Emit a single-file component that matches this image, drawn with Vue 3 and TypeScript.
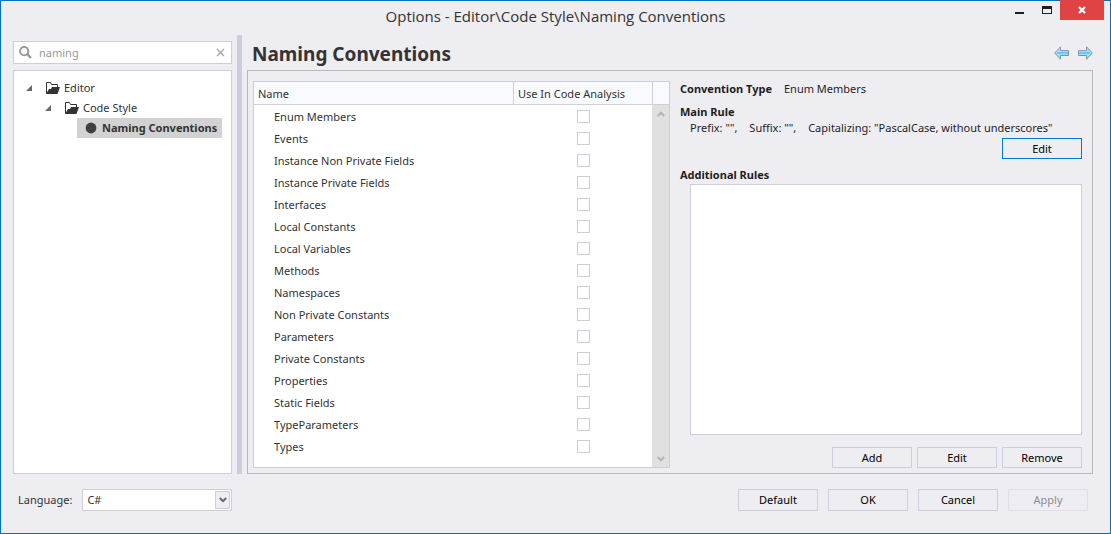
<script setup lang="ts">
import { reactive, ref } from 'vue'

interface Convention {
  name: string
  analysis: boolean
}

const names: string[] = [
  'Enum Members',
  'Events',
  'Instance Non Private Fields',
  'Instance Private Fields',
  'Interfaces',
  'Local Constants',
  'Local Variables',
  'Methods',
  'Namespaces',
  'Non Private Constants',
  'Parameters',
  'Private Constants',
  'Properties',
  'Static Fields',
  'TypeParameters',
  'Types',
]
const conventions = reactive<Convention[]>(names.map((name) => ({ name, analysis: false })))
const selected = ref<string>('Enum Members')
const search = ref<string>('naming')
const language = ref<string>('C#')
</script>

<template>
  <div class="window">
    <header class="titlebar">
      <div class="title">Options - Editor\Code Style\Naming Conventions</div>
      <div class="controls">
        <button type="button" class="ctl" aria-label="Minimize">
          <svg width="9" height="10" viewBox="0 0 9 10"><rect y="7" width="9" height="2" fill="#1e1e1e" /></svg>
        </button>
        <button type="button" class="ctl" aria-label="Maximize">
          <svg width="10" height="8" viewBox="0 0 10 8"><path d="M0 0h10v8H0zM1 3v4h8V3z" fill="#1e1e1e" fill-rule="evenodd" /></svg>
        </button>
        <button type="button" class="ctl close" aria-label="Close">
          <svg width="8" height="8" viewBox="0 0 8 8"><path d="M1 1l6 6M7 1l-6 6" stroke="#fff" stroke-width="2.2" /></svg>
        </button>
      </div>
    </header>

    <main class="body">
      <aside class="side">
        <div class="search">
          <svg class="lens" width="13" height="13" viewBox="0 0 13 13">
            <circle cx="5.2" cy="5.2" r="4.1" fill="none" stroke="#999" stroke-width="2" />
            <path d="M8.2 8.2l3.8 3.8" stroke="#999" stroke-width="2.4" />
          </svg>
          <input v-model="search" type="text" aria-label="Search options" />
          <button type="button" class="clear" aria-label="Clear search" @click="search = ''">
            <svg width="9" height="9" viewBox="0 0 9 9"><path d="M1 1l7 7M8 1l-7 7" stroke="#a8a8a8" stroke-width="1.4" /></svg>
          </button>
        </div>
        <ul class="tree">
          <li>
            <div class="node">
              <svg class="twist" width="6" height="6" viewBox="0 0 6 6"><path d="M6 0v6H0z" fill="#6a6a6a" /></svg>
              <svg class="folder" width="14" height="12" viewBox="0 0 14 12">
                <path d="M.5 11.500V.5h4l1 2h6V6" fill="none" stroke="#333" />
                <path d="M0 12l3-5h2l1-2h8L11.500 12z" fill="#333" />
              </svg>
              <span>Editor</span>
            </div>
            <ul>
              <li>
                <div class="node">
                  <svg class="twist" width="6" height="6" viewBox="0 0 6 6"><path d="M6 0v6H0z" fill="#6a6a6a" /></svg>
                  <svg class="folder" width="14" height="12" viewBox="0 0 14 12">
                    <path d="M.5 11.500V.5h4l1 2h6V6" fill="none" stroke="#333" />
                    <path d="M0 12l3-5h2l1-2h8L11.500 12z" fill="#333" />
                  </svg>
                  <span>Code Style</span>
                </div>
                <ul>
                  <li>
                    <div class="leaf">
                      <svg width="12" height="12" viewBox="0 0 12 12"><circle cx="6" cy="6" r="5.400" fill="#404040" /></svg>
                      <span>Naming Conventions</span>
                    </div>
                  </li>
                </ul>
              </li>
            </ul>
          </li>
        </ul>
      </aside>

      <div class="splitter"></div>

      <section class="content">
        <div class="heading">
          <h1>Naming Conventions</h1>
          <div class="nav">
            <button type="button" aria-label="Back">
              <svg width="15" height="14" viewBox="0 0 15 14">
                <path d="M.7 7L6.500.8v3.700h8v5h-8v3.700z" fill="#a9dcfa" />
                <path d="M3 7h11" stroke="#68c8fa" stroke-width="2" />
                <path d="M.7 7L6.500.8v3.700h8" fill="none" stroke="#9096c4" />
                <path d="M.7 7l5.800 6.200V9.500h8v-5" fill="none" stroke="#6f9c90" />
              </svg>
            </button>
            <button type="button" aria-label="Forward">
              <svg width="15" height="14" viewBox="0 0 15 14">
                <path d="M14.300 7L8.500.8v3.700h-8v5h8v3.700z" fill="#a9dcfa" />
                <path d="M1 7h11" stroke="#68c8fa" stroke-width="2" />
                <path d="M.5 9.500v-5h8V.8" fill="none" stroke="#9096c4" />
                <path d="M8.500.8L14.300 7l-5.800 6.200V9.500h-8" fill="none" stroke="#6f9c90" />
              </svg>
            </button>
          </div>
        </div>

        <div class="panel">
          <div class="grid">
            <table>
              <thead>
                <tr><th class="c-name">Name</th><th class="c-use">Use In Code Analysis</th></tr>
              </thead>
              <tbody>
                <tr v-for="(c, i) in conventions" :key="c.name" @click="selected = c.name">
                  <td><label :for="'use-' + i">{{ c.name }}</label></td>
                  <td class="tick"><input :id="'use-' + i" v-model="c.analysis" type="checkbox" /></td>
                </tr>
              </tbody>
            </table>
            <div class="scroll">
              <div class="corner"></div>
              <div class="track">
                <svg width="8" height="6" viewBox="0 0 8 6"><path d="M.8 5L4 1.600 7.200 5" fill="none" stroke="#b4b4b4" stroke-width="2" /></svg>
                <svg width="8" height="6" viewBox="0 0 8 6"><path d="M.8 1L4 4.400 7.200 1" fill="none" stroke="#b4b4b4" stroke-width="2" /></svg>
              </div>
            </div>
          </div>

          <div class="details">
            <div class="type"><h2>Convention Type</h2><span>{{ selected }}</span></div>
            <h2 class="main-rule">Main Rule</h2>
            <div class="rule">
              <span>Prefix: "",</span><span>Suffix: "",</span><span>Capitalizing: "PascalCase, without underscores"</span>
            </div>
            <div class="row"><button type="button" class="btn focus">Edit</button></div>
            <h2 class="additional">Additional Rules</h2>
            <div class="rules"></div>
            <div class="row actions">
              <button type="button" class="btn">Add</button>
              <button type="button" class="btn">Edit</button>
              <button type="button" class="btn">Remove</button>
            </div>
          </div>
        </div>
      </section>
    </main>

    <footer class="footer">
      <div class="language">
        <label for="language">Language:</label>
        <div class="select">
          <select id="language" v-model="language">
            <option>C#</option>
          </select>
          <span class="drop">
            <svg width="8" height="6" viewBox="0 0 8 6"><path d="M.8 1L4 4.200 7.200 1" fill="none" stroke="#666" stroke-width="2" /></svg>
          </span>
        </div>
      </div>
      <div class="buttons">
        <button type="button" class="btn">Default</button>
        <button type="button" class="btn">OK</button>
        <button type="button" class="btn">Cancel</button>
        <button type="button" class="btn" disabled>Apply</button>
      </div>
    </footer>
  </div>
</template>

<style>
body {
  margin: 0;
}
</style>

<style scoped>
* {
  box-sizing: border-box;
}
.window {
  display: flex;
  flex-direction: column;
  min-height: 100vh;
  border: 1px solid #0072c0;
  background: #eeedf2;
  color: #333;
  font: 11px/16px "Noto Sans", "Open Sans", sans-serif;
}
svg {
  display: block;
  flex: none;
}
button,
input,
select {
  margin: 0;
  padding: 0;
  font: inherit;
  color: inherit;
  border: 0;
  background: none;
}
ul {
  margin: 0;
  padding: 0;
  list-style: none;
}
h1,
h2 {
  margin: 0;
}
.titlebar {
  position: relative;
  height: 34px;
}
.title {
  text-align: center;
  font-family: "Open Sans", "Noto Sans", sans-serif;
  font-size: 15px;
  line-height: 30px;
}
.controls {
  position: absolute;
  top: -1px;
  right: 6px;
  display: flex;
}
.ctl {
  display: flex;
  align-items: center;
  justify-content: center;
  width: 27px;
  height: 20px;
}
.close {
  width: 44px;
  background: #e04343;
}
.body {
  flex: 1;
  display: flex;
  gap: 5px;
  padding: 0 17px 0 12px;
}
.side {
  display: flex;
  flex-direction: column;
  gap: 6px;
  width: 219px;
  padding-top: 6px;
}
.search {
  display: flex;
  align-items: center;
  height: 23px;
  padding: 0 5px;
  border: 1px solid #cccedb;
  background: #fff;
}
.search input {
  flex: 1;
  min-width: 0;
  padding-left: 7px;
  color: #999;
  outline: 0;
}
.clear {
  padding: 1px;
}
.tree {
  flex: 1;
  padding: 7px;
  border: 1px solid #cccedb;
  background: #fff;
}
.tree ul {
  padding-left: 19px;
}
.node {
  display: flex;
  align-items: center;
  height: 20px;
  padding-left: 5px;
}
.folder {
  margin: 0 4px 0 14px;
}
.leaf {
  display: inline-flex;
  align-items: center;
  gap: 5px;
  height: 20px;
  margin-left: 18px;
  padding: 0 5px 0 8px;
  background: #d2d2d2;
  font-weight: bold;
  white-space: nowrap;
  vertical-align: top;
}
.splitter {
  width: 5px;
  background: #cccedb;
}
.content {
  flex: 1;
  display: flex;
  flex-direction: column;
  min-width: 0;
}
.heading {
  display: flex;
  align-items: center;
  justify-content: space-between;
  height: 35px;
  padding-left: 5px;
}
h1 {
  padding-top: 2px;
  font-size: 19px;
  line-height: 24px;
}
.nav {
  display: flex;
  gap: 9px;
}
.panel {
  flex: 1;
  display: flex;
  gap: 10px;
  padding: 10px 10px 5px 5px;
  border: 1px solid #b8b8bc;
}
.grid {
  display: flex;
  flex: 415 1 0;
  border: 1px solid #cccedb;
  background: #fff;
}
table {
  flex: 1;
  align-self: flex-start;
  table-layout: fixed;
  border-collapse: separate;
  border-spacing: 0;
}
th {
  height: 23px;
  padding: 1px 0 0 4px;
  text-align: left;
  font-weight: normal;
  border-bottom: 1px solid #cccedb;
  background: #f8fafe;
  white-space: nowrap;
}
.c-use {
  width: 140px;
  border-left: 1px solid #cccedb;
}
td {
  height: 22px;
  padding: 1px 0 0 20px;
}
td.tick {
  padding: 0;
}
.tick input {
  display: block;
  appearance: none;
  width: 13px;
  height: 13px;
  margin: 0 auto;
  border: 1px solid #cccedb;
  background: #fff;
}
.tick input:checked {
  background: #007acc;
}
.scroll {
  display: flex;
  flex-direction: column;
  width: 17px;
  margin-left: -1px;
}
.corner {
  height: 23px;
  border-left: 1px solid #cccedb;
  border-bottom: 1px solid #cccedb;
  background: #f8fafe;
}
.track {
  flex: 1;
  display: flex;
  flex-direction: column;
  align-items: center;
  justify-content: space-between;
  padding: 6px 0 5px;
  background: #e0e0e0;
}
.details {
  flex: 402 1 0;
  display: flex;
  flex-direction: column;
  min-width: 0;
  color: #1e1e1e;
}
h2 {
  font-size: 11px;
  line-height: 16px;
}
.type {
  display: flex;
  gap: 12px;
}
.main-rule {
  margin-top: 7px;
}
.rule {
  display: flex;
  gap: 12px;
  padding-left: 10px;
  margin-bottom: 2px;
  white-space: nowrap;
}
.row {
  display: flex;
  justify-content: flex-end;
  gap: 5px;
}
.row .btn {
  height: 21px;
}
.additional {
  margin: 8px 0 1px;
}
.rules {
  flex: 1;
  margin-left: 10px;
  border: 1px solid #cccedb;
  background: #fff;
}
.actions {
  margin-top: 12px;
}
.btn {
  width: 80px;
  height: 22px;
  border: 1px solid #cccedb;
  color: #000;
}
.focus {
  border-color: #007acc;
}
.btn:disabled {
  border-color: #dedfe8;
  color: #8d8d91;
}
.footer {
  display: flex;
  align-items: center;
  justify-content: space-between;
  height: 59px;
  padding: 0 22px 7px 17px;
}
.language {
  display: flex;
  align-items: center;
  width: 214px;
  gap: 10px;
}
.select {
  position: relative;
  flex: 1;
}
select {
  display: block;
  appearance: none;
  width: 100%;
  height: 22px;
  padding-left: 4px;
  border: 1px solid #cccedb;
  background: #fff;
}
.drop {
  position: absolute;
  top: 2px;
  right: 2px;
  bottom: 2px;
  width: 15px;
  display: flex;
  align-items: center;
  justify-content: center;
  border: 1px solid #cccedb;
  background: #eeedf2;
  pointer-events: none;
}
.buttons {
  display: flex;
  gap: 10px;
}
</style>
